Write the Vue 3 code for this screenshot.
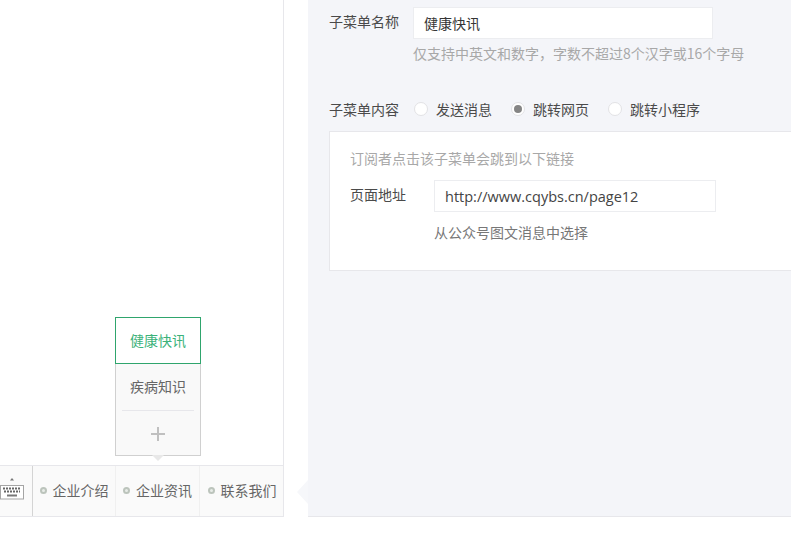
<template>
  <div class="page">
    <!-- 手机预览 -->
    <div class="preview">
      <div class="sub-menu">
        <div
          v-for="(item, i) in subItems"
          :key="item"
          :class="['sub-item', { active: i === 0 }]"
        >
          <span class="sub-text">{{ item }}</span>
        </div>
        <div class="sub-add">
          <span class="plus"></span>
        </div>
        <span class="sub-arrow"></span>
      </div>
      <div class="menu-bar">
        <div class="keyboard">
          <svg width="24" height="22" viewBox="0 0 24 22" fill="none">
            <path d="M12 0 L10 2.5 H14 Z" fill="#777" />
            <rect x="0.5" y="7.5" width="23" height="13.5" fill="#fff" stroke="#a5a5a5" />
            <path d="M3 10.5h18M4 13.5h16" stroke="#666" stroke-width="2" stroke-dasharray="2 1" />
            <path d="M7 17.5h10" stroke="#777" stroke-width="2" />
          </svg>
        </div>
        <div v-for="menu in menus" :key="menu" class="menu-item">
          <span class="dot"></span>
          <span>{{ menu }}</span>
        </div>
      </div>
    </div>

    <!-- 编辑面板 -->
    <div class="editor">
      <span class="editor-arrow"></span>
      <div class="form-row name-row">
        <label class="form-label">子菜单名称</label>
        <div>
          <div class="name-input">健康快讯</div>
          <p class="hint">仅支持中英文和数字，字数不超过8个汉字或16个字母</p>
        </div>
      </div>

      <div class="radio-row">
        <label class="form-label">子菜单内容</label>
        <div
          v-for="(opt, i) in options"
          :key="opt"
          :class="['radio', 'radio-' + i]"
        >
          <span :class="['radio-mark', { checked: i === 1 }]"></span>
          <span>{{ opt }}</span>
        </div>
      </div>

      <div class="card">
        <p class="card-tip">订阅者点击该子菜单会跳到以下链接</p>
        <div class="url-row">
          <label class="url-label">页面地址</label>
          <div>
            <div class="url-input">http://www.cqybs.cn/page12</div>
            <p class="url-pick">从公众号图文消息中选择</p>
          </div>
        </div>
      </div>
    </div>
  </div>
</template>

<script setup>
const subItems = ['健康快讯', '疾病知识']
const menus = ['企业介绍', '企业资讯', '联系我们']
const options = ['发送消息', '跳转网页', '跳转小程序']
</script>

<style>
html,
body {
  margin: 0;
  background: #fff;
}
</style>

<style scoped>
.page {
  display: flex;
  width: 791px;
  height: 533px;
  overflow: hidden;
  background: #fff;
  font-family: "Noto Sans CJK SC", "Liberation Sans", sans-serif;
  font-size: 14px;
  color: #4a4a4a;
}

p {
  margin: 0;
}

/* 手机预览 */
.preview {
  box-sizing: border-box;
  flex: none;
  width: 284px;
  height: 517px;
  margin-right: 24px;
  border-right: 1px solid #e7e7eb;
  border-bottom: 1px solid #e7e7eb;
  display: flex;
  flex-direction: column;
  justify-content: flex-end;
}

.sub-menu {
  position: relative;
  box-sizing: border-box;
  width: 86px;
  height: 139px;
  margin: 0 0 9px 115px;
  background: #f9f9f9;
  border: 1px solid #d0d0d0;
  border-top: none;
  display: flex;
  flex-direction: column;
}

.sub-item {
  flex: none;
  box-sizing: border-box;
  height: 46px;
  padding-bottom: 2px;
  display: flex;
  align-items: center;
  justify-content: center;
  color: #666;
}

.sub-item.active {
  height: 47px;
  margin: 0 -1px;
  padding-bottom: 2px;
  background: #fff;
  border: 1px solid #2fa56d;
  color: #3bb27a;
}

.sub-add {
  flex: 1;
  margin: 0 6px;
  padding-top: 2px;
  border-top: 1px solid #e7e7eb;
  display: flex;
  align-items: center;
  justify-content: center;
}

.plus {
  position: relative;
  width: 14px;
  height: 14px;
}

.plus::before,
.plus::after {
  content: "";
  position: absolute;
  background: #c0c0c0;
}

.plus::before {
  left: 0;
  right: 0;
  top: 6px;
  height: 2px;
}

.plus::after {
  top: 0;
  bottom: 0;
  left: 6px;
  width: 2px;
}

.sub-arrow {
  position: absolute;
  left: 36px;
  bottom: -6px;
  width: 0;
  height: 0;
  border-left: 6px solid transparent;
  border-right: 6px solid transparent;
  border-top: 6px solid #e8e8e8;
}

.menu-bar {
  flex: none;
  height: 51px;
  display: flex;
  background: #fafafa;
  border-top: 1px solid #e7e7eb;
  box-sizing: border-box;
}

.keyboard {
  flex: none;
  box-sizing: border-box;
  width: 33px;
  display: flex;
  align-items: center;
  justify-content: flex-end;
  padding: 0 8px 4px 0;
  border-right: 1px solid #d4d4d4;
  overflow: hidden;
}

.keyboard svg {
  flex: none;
}

.menu-item {
  box-sizing: border-box;
  flex: none;
  width: 84px;
  padding-bottom: 2px;
  display: flex;
  align-items: center;
  justify-content: center;
  gap: 6px;
  border-right: 1px solid #f0f0f0;
  color: #666;
}

.menu-item:nth-child(2) {
  width: 83px;
}

.menu-item:last-child {
  border-right: none;
}

.dot {
  box-sizing: border-box;
  width: 7px;
  height: 7px;
  border: 2px solid #bcc4bc;
  border-radius: 50%;
  background: #e8ece8;
}

/* 编辑面板 */
.editor {
  position: relative;
  box-sizing: border-box;
  flex: 1;
  height: 517px;
  padding: 7px 0 0 21px;
  background: #f4f5f9;
  border-bottom: 1px solid #e7e7eb;
}

.editor-arrow {
  position: absolute;
  left: -11px;
  top: 480px;
  width: 0;
  height: 0;
  border-top: 12px solid transparent;
  border-bottom: 12px solid transparent;
  border-right: 11px solid #f6f7fa;
}

.form-row {
  display: flex;
}

.form-label {
  flex: none;
  width: 84px;
  line-height: 28px;
}

.name-input {
  box-sizing: border-box;
  width: 300px;
  height: 32px;
  padding-left: 10px;
  line-height: 30px;
  background: #fff;
  border: 1px solid #ecedf0;
  color: #353535;
}

.hint {
  margin-top: 5px;
  line-height: 18px;
  color: #a8a8a8;
}

.radio-row {
  display: flex;
  align-items: center;
  height: 20px;
  margin-top: 37px;
}

.radio-row .form-label {
  width: 85px;
}

.radio {
  display: flex;
  align-items: center;
  gap: 8px;
}

.radio-0 {
  width: 97px;
}

.radio-1 {
  width: 97px;
}

.radio-mark {
  box-sizing: border-box;
  width: 14px;
  height: 14px;
  border: 1px solid #e2e2e5;
  border-radius: 50%;
  background: #fff;
  display: flex;
  align-items: center;
  justify-content: center;
}

.radio-mark.checked::after {
  content: "";
  width: 8px;
  height: 8px;
  border-radius: 50%;
  background: #858585;
}

.card {
  box-sizing: border-box;
  height: 140px;
  margin-top: 12px;
  padding: 16px 20px 0;
  background: #fff;
  border: 1px solid #e7e7eb;
  border-right: none;
}

.card-tip {
  line-height: 20px;
  color: #a8a8a8;
}

.url-row {
  display: flex;
  margin-top: 12px;
}

.url-label {
  flex: none;
  width: 84px;
  line-height: 28px;
}

.url-input {
  box-sizing: border-box;
  width: 282px;
  height: 32px;
  padding-left: 10px;
  line-height: 32px;
  background: #fff;
  border: 1px solid #ecedf0;
  color: #444;
  font-family: "Open Sans", "Noto Sans", sans-serif;
  font-size: 14.5px;
}

.url-pick {
  margin-top: 10px;
  line-height: 20px;
  color: #777;
}
</style>
